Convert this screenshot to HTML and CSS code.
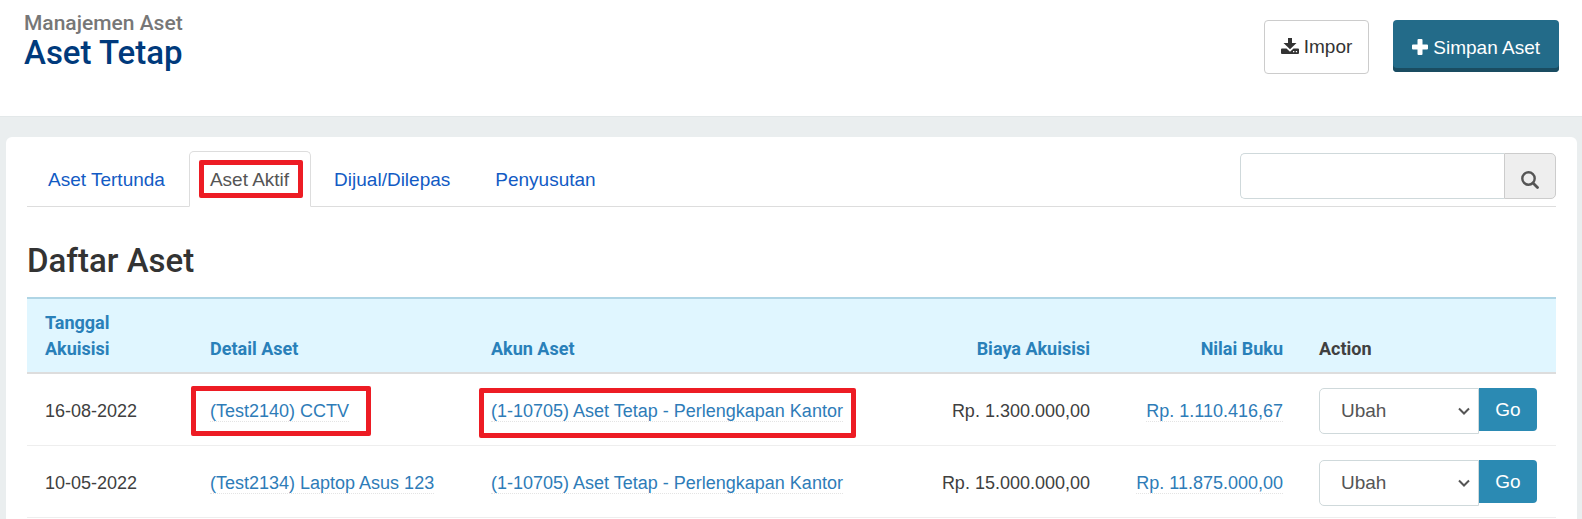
FILE: index.html
```
<!DOCTYPE html>
<html lang="id">
<head>
<meta charset="utf-8">
<title>Aset Tetap</title>
<link rel="stylesheet" href="styles.css">
</head>
<body>
<header class="page-header">
  <div class="page-titles">
    <p class="page-section">Manajemen Aset</p>
    <h1 class="page-title">Aset Tetap</h1>
  </div>
  <div class="page-actions">
    <button class="btn btn-default" type="button">
      <svg class="icon" width="18" height="16" viewBox="0 0 18 16" aria-hidden="true"><path fill="currentColor" d="M7 0h4v5h4.500L9 11.300 2.500 5H7z"/><path fill="currentColor" d="M1 10.500h4.500L9 13.800l3.500-3.300H17q1 0 1 1V15q0 1-1 1H1q-1 0-1-1v-3.500q0-1 1-1z"/><path fill="#fff" d="M12 13h1.300v1.300H12zM14.800 13h1.300v1.300h-1.300z"/></svg>
      <span>Impor</span>
    </button>
    <button class="btn btn-primary" type="button">
      <svg class="icon" width="16" height="16" viewBox="0 0 16 16" aria-hidden="true"><path fill="currentColor" d="M6.500 0h3q1 0 1 1v4.500H15q1 0 1 1v3q0 1-1 1h-4.500V15q0 1-1 1h-3q-1 0-1-1v-4.500H1q-1 0-1-1v-3q0-1 1-1h4.500V1q0-1 1-1z"/></svg>
      <span>Simpan Aset</span>
    </button>
  </div>
</header>
<main class="panel">
  <div class="toolbar">
    <nav class="tabs">
      <a class="tab" href="#tertunda">Aset Tertunda</a>
      <a class="tab tab-active" href="#aktif"><span class="marked marked-tab">Aset Aktif</span></a>
      <a class="tab" href="#dijual">Dijual/Dilepas</a>
      <a class="tab" href="#penyusutan">Penyusutan</a>
    </nav>
    <form class="search">
      <input class="search-input" type="text" aria-label="Cari aset">
      <button class="search-button" type="button" aria-label="Cari">
        <svg width="18" height="18" viewBox="0 0 18 18" aria-hidden="true"><circle cx="7.500" cy="7.500" r="6.200" fill="none" stroke="currentColor" stroke-width="2.400"/><path d="M12 12l4.500 4.500" stroke="currentColor" stroke-width="2.800" stroke-linecap="round"/></svg>
      </button>
    </form>
  </div>
  <h2 class="list-title">Daftar Aset</h2>
  <table class="assets">
    <colgroup><col class="col-date"><col class="col-detail"><col><col class="col-cost"><col class="col-value"><col class="col-action"></colgroup>
    <thead>
      <tr>
        <th><a class="sort" href="#date">Tanggal Akuisisi</a></th>
        <th><a class="sort" href="#detail">Detail Aset</a></th>
        <th><a class="sort" href="#account">Akun Aset</a></th>
        <th class="num"><a class="sort" href="#cost">Biaya Akuisisi</a></th>
        <th class="num"><a class="sort" href="#value">Nilai Buku</a></th>
        <th>Action</th>
      </tr>
    </thead>
    <tbody>
      <tr>
        <td>16-08-2022</td>
        <td><span class="marked marked-detail"><a class="link" href="#a1">(Test2140) CCTV</a></span></td>
        <td><span class="marked marked-account"><a class="link" href="#k1">(1-10705) Aset Tetap - Perlengkapan Kantor</a></span></td>
        <td class="num">Rp. 1.300.000,00</td>
        <td class="num"><a class="link" href="#n1">Rp. 1.110.416,67</a></td>
        <td><div class="action"><select class="action-select" aria-label="Tindakan CCTV"><option>Ubah</option></select><button class="action-go" type="button">Go</button></div></td>
      </tr>
      <tr>
        <td>10-05-2022</td>
        <td><a class="link" href="#a2">(Test2134) Laptop Asus 123</a></td>
        <td><a class="link" href="#k2">(1-10705) Aset Tetap - Perlengkapan Kantor</a></td>
        <td class="num">Rp. 15.000.000,00</td>
        <td class="num"><a class="link" href="#n2">Rp. 11.875.000,00</a></td>
        <td><div class="action"><select class="action-select" aria-label="Tindakan Laptop Asus 123"><option>Ubah</option></select><button class="action-go" type="button">Go</button></div></td>
      </tr>
    </tbody>
  </table>
</main>
</body>
</html>
```
FILE: styles.css
```
* { box-sizing: border-box; }

body {
  display: flex;
  flex-direction: column;
  min-height: 100vh;
  margin: 0;
  background: #eaeeef;
  color: #404040;
  font: 18px/26px "Liberation Sans", Arial, sans-serif;
}

a { text-decoration: none; }

.page-header {
  display: flex;
  justify-content: space-between;
  align-items: flex-start;
  padding: 10px 23px 42px 24px;
  background: #fff;
  border-bottom: 1px solid #e3e8e9;
}

.page-section,
.page-title {
  margin: 0;
  font-family: Roboto, sans-serif;
  font-weight: 500;
}

.page-section { color: #777; font-size: 21px; line-height: 26px; }
.page-title { color: #003a7c; font-size: 33px; line-height: 34px; }

.page-actions {
  display: flex;
  align-items: flex-start;
  gap: 24px;
  padding-top: 10px;
}

.btn {
  display: flex;
  align-items: center;
  gap: 5px;
  border-radius: 4px;
  font: 19px/26px "Liberation Sans", Arial, sans-serif;
}

.icon { margin-bottom: 3px; }

.btn-default {
  height: 54px;
  padding: 0 16px;
  border: 1px solid #ccc;
  background: #fff;
  color: #333;
}

.btn-primary {
  height: 52px;
  padding: 4px 19px 0;
  border: 0;
  background: #236b89;
  box-shadow: inset 0 -4px #1a4c61;
  color: #fff;
}

.btn-primary .icon { margin-bottom: 2px; }

.panel {
  flex: 1;
  margin: 20px 5px 0 6px;
  padding: 14px 21px 0;
  background: #fff;
  border-radius: 6px 6px 0 0;
}

.toolbar {
  display: flex;
  justify-content: space-between;
  align-items: flex-start;
  border-bottom: 1px solid #ddd;
}

.tabs { display: flex; gap: 2px; margin-bottom: -1px; }

.tab {
  padding: 15px 21px 13px 20px;
  border: 1px solid transparent;
  border-radius: 5px 5px 0 0;
  color: #125bc4;
  font-size: 19px;
}

.tab-active {
  border-color: #ddd;
  border-bottom-color: #fff;
  color: #555;
}

.search { display: flex; width: 316px; height: 46px; margin-top: 2px; }

.search-input {
  flex: 1;
  min-width: 0;
  border: 1px solid #cfd9db;
  border-right: 0;
  border-radius: 5px 0 0 5px;
  background: #fff;
}

.search-button {
  display: flex;
  align-items: center;
  justify-content: center;
  width: 52px;
  padding: 7px 0 0;
  border: 1px solid #ccc;
  border-radius: 0 5px 5px 0;
  background: #eee;
  color: #555;
}

.list-title {
  margin: 34px 0 16px;
  color: #333;
  font: 500 33px/40px Roboto, sans-serif;
}

.assets {
  width: 100%;
  table-layout: fixed;
  border-collapse: separate;
  border-spacing: 0;
}

.col-date { width: 165px; }
.col-detail { width: 281px; }
.col-cost { width: 190px; }
.col-value { width: 193px; }
.col-action { width: 255px; }

.assets th {
  padding: 11px 18px 10px;
  border-top: 2px solid #afd5e5;
  border-bottom: 2px solid #ddd;
  background: #e0f6ff;
  font: 700 18px/26px Roboto, sans-serif;
  text-align: left;
  vertical-align: bottom;
}

.assets th:first-child { padding-right: 60px; }

.assets td {
  padding: 14px 18px 11px;
  border-bottom: 1px solid #eee;
  white-space: nowrap;
}

.assets .num { text-align: right; }
.sort { color: #2980b9; }
.link { border-bottom: 1px dotted #e4e4e4; color: #2e7cb8; }

/* Red frames that point out parts of the screen */
.marked { position: relative; }

.marked::after {
  content: "";
  position: absolute;
  border: 5px solid #ed1c24;
  border-radius: 2px;
  pointer-events: none;
}

.marked-tab::after { inset: -9px -14px -8px -11px; }
.marked-detail::after { inset: -15px -22px -15px -19px; }
.marked-account::after { inset: -13px -13px -17px -12px; }

.action { display: flex; align-items: flex-start; }

.action-select {
  width: 160px;
  height: 46px;
  padding: 0 21px;
  border: 1px solid #cfd9db;
  border-radius: 5px 0 0 5px;
  appearance: none;
  background: #fff url("data:image/svg+xml,%3Csvg xmlns='http://www.w3.org/2000/svg' width='12' height='8'%3E%3Cpath d='M1 1.500l5 5 5-5' fill='none' stroke='%23555' stroke-width='2'/%3E%3C/svg%3E") no-repeat right 8px center;
  color: #555;
  font: 19px/26px "Liberation Sans", Arial, sans-serif;
}

.action-go {
  width: 58px;
  height: 43px;
  padding: 0;
  border: 0;
  border-radius: 0 4px 4px 0;
  background: #2b8ab3;
  color: #fff;
  font: 19px/26px "Liberation Sans", Arial, sans-serif;
}
```
